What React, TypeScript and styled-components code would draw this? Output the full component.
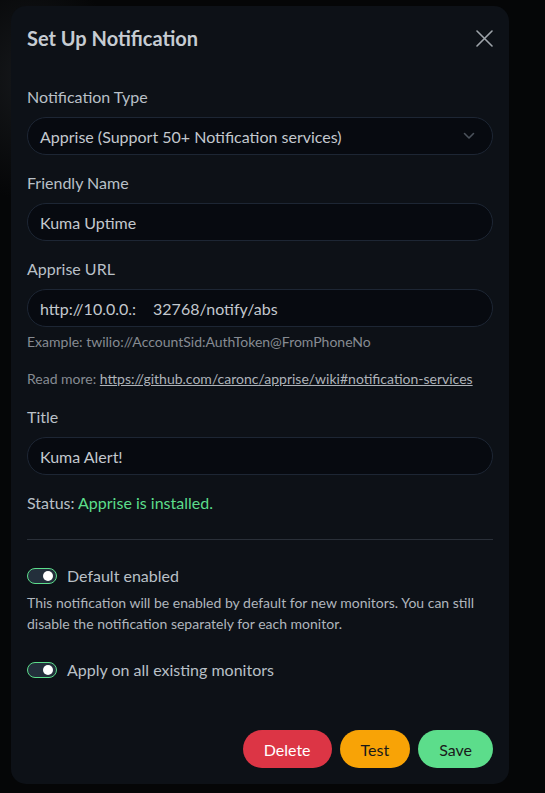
import React from "react";
import styled, { createGlobalStyle } from "styled-components";

const Global = createGlobalStyle`
  html, body { margin: 0; padding: 0; background: #050607; }
  body { font-family: Lato, "Noto Sans", "Liberation Sans", sans-serif; }
  * { box-sizing: border-box; }
`;

const Page = styled.div`
  width: 545px;
  height: 793px;
  padding: 6px 36px 9px 11px;
  background: radial-gradient(ellipse at 5% 10%, #16181b 0%, #050607 12%), #050607;
`;

const Modal = styled.div`
  width: 498px;
  height: 778px;
  background: #0d1117;
  border-radius: 15px;
  display: flex;
  flex-direction: column;
`;

const Header = styled.div`
  display: flex;
  align-items: center;
  justify-content: space-between;
  padding: 17px 16px 16px 16px;
`;

const Title = styled.h5`
  margin: 0;
  font-size: 20px;
  line-height: 30px;
  font-weight: 700;
  color: #c6ccd2;
`;

const CloseButton = styled.button`
  width: 18px;
  height: 18px;
  padding: 0;
  border: 0;
  background: transparent;
  display: flex;
  align-items: center;
  justify-content: center;
  cursor: pointer;
`;

const Body = styled.div`
  flex: 1;
  padding: 16px 16px 0 16px;
  display: flex;
  flex-direction: column;
`;

const Group = styled.div<{ $mb?: number }>`
  margin-bottom: ${(p) => (p.$mb ?? 16)}px;
`;

const Label = styled.div`
  font-size: 16px;
  line-height: 24px;
  color: #b9c0c7;
  margin-bottom: 8px;
`;

const Field = styled.div`
  height: 38px;
  border: 1px solid #1d2634;
  border-radius: 19px;
  background: #070a10;
  padding: 0 12px;
  display: flex;
  align-items: center;
  justify-content: space-between;
  font-size: 16px;
  color: #c3c8ce;
  white-space: nowrap;
`;

const Redact = styled.span`
  display: inline-block;
  width: 17px;
`;

const Help = styled.p`
  margin: 4px 0 0 0;
  font-size: 14px;
  line-height: 21px;
  color: #868b92;
  & + & { margin-top: 16px; }
`;

const Link = styled.a`
  color: #aeb3b9;
  text-decoration: underline;
`;

const Status = styled.p`
  margin: 0;
  font-size: 16px;
  line-height: 24px;
  color: #b9c0c7;
`;

const Ok = styled.span`
  color: #5cdd8b;
`;

const Divider = styled.hr`
  margin: 24px 0 24px 0;
  border: 0;
  border-top: 1px solid #2a3039;
`;

const SwitchRow = styled.label`
  display: flex;
  align-items: center;
  gap: 10px;
  font-size: 16px;
  line-height: 24px;
  color: #b9c0c7;
`;

const Switch = styled.span`
  width: 30px;
  height: 16px;
  border: 1px solid #5cdd8b;
  border-radius: 8px;
  background: #232f3b;
  display: flex;
  align-items: center;
  justify-content: flex-end;
  padding: 0 3px;
  &::after {
    content: "";
    width: 10px;
    height: 10px;
    border-radius: 50%;
    background: #ffffff;
  }
`;

const SwitchHelp = styled.div`
  margin: 4px 0 24px 0;
  font-size: 14px;
  line-height: 21px;
  color: #b0b6bd;
`;

const Footer = styled.div`
  display: flex;
  justify-content: flex-end;
  gap: 8px;
  padding: 0 16px 16px 16px;
`;

const Btn = styled.button<{ $bg: string; $fg: string }>`
  height: 38px;
  padding: 0 21px;
  border: 0;
  border-radius: 19px;
  background: ${(p) => p.$bg};
  color: ${(p) => p.$fg};
  font-family: inherit;
  font-size: 16px;
  cursor: pointer;
`;

export default function App() {
  return (
    <>
      <Global />
      <Page>
        <Modal>
          <Header>
            <Title>Set Up Notification</Title>
            <CloseButton aria-label="Close">
              <svg width="17" height="17" viewBox="0 0 17 17">
                <path d="M1 1L16 16M16 1L1 16" stroke="#9ea4aa" strokeWidth="1.6" strokeLinecap="round" />
              </svg>
            </CloseButton>
          </Header>
          <Body>
            <Group>
              <Label>Notification Type</Label>
              <Field>
                <span>Apprise (Support 50+ Notification services)</span>
                <svg width="12" height="8" viewBox="0 0 12 8" style={{ marginRight: 5 }}>
                  <path d="M1.5 1.5L6 6L10.5 1.5" stroke="#4b525b" strokeWidth="1.6" fill="none" strokeLinecap="round" strokeLinejoin="round" />
                </svg>
              </Field>
            </Group>
            <Group>
              <Label>Friendly Name</Label>
              <Field>Kuma Uptime</Field>
            </Group>
            <Group $mb={16}>
              <Label>Apprise URL</Label>
              <Field>
                <span>
                  http://10.0.0.:<Redact />32768/notify/abs
                </span>
              </Field>
              <Help>Example: twilio://AccountSid:AuthToken@FromPhoneNo</Help>
              <Help>
                Read more: <Link href="#">https://github.com/caronc/apprise/wiki#notification-services</Link>
              </Help>
            </Group>
            <Group>
              <Label>Title</Label>
              <Field>Kuma Alert!</Field>
            </Group>
            <Status>
              Status: <Ok>Apprise is installed.</Ok>
            </Status>
            <Divider />
            <SwitchRow>
              <Switch />
              Default enabled
            </SwitchRow>
            <SwitchHelp>
              This notification will be enabled by default for new monitors. You can still disable the notification separately for each monitor.
            </SwitchHelp>
            <SwitchRow>
              <Switch />
              Apply on all existing monitors
            </SwitchRow>
          </Body>
          <Footer>
            <Btn $bg="#dc3545" $fg="#ffffff">Delete</Btn>
            <Btn $bg="#f8a306" $fg="#1a1a1a">Test</Btn>
            <Btn $bg="#5cdd8b" $fg="#1a1a1a">Save</Btn>
          </Footer>
        </Modal>
      </Page>
    </>
  );
}
